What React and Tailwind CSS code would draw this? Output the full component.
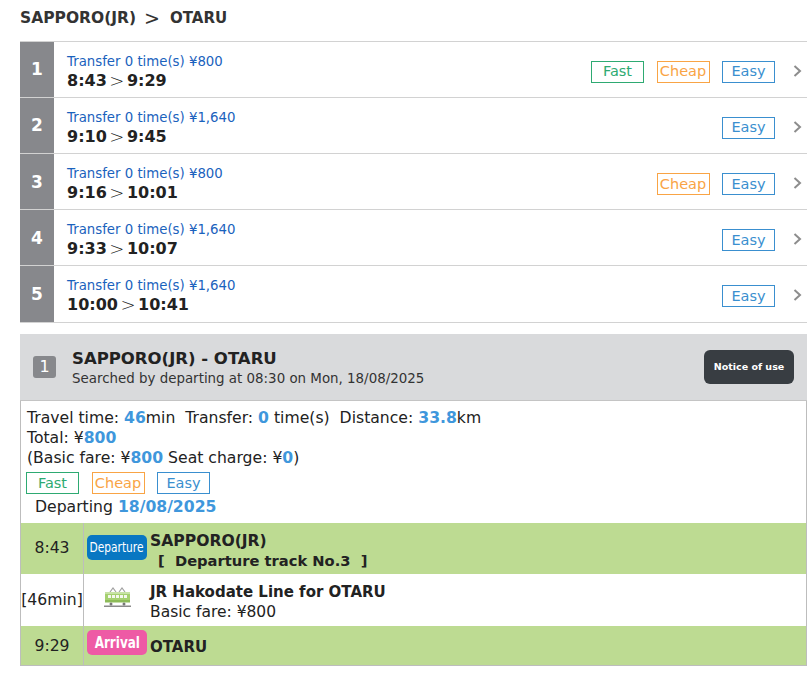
function Tag({ c, children }) {
  const m = {
    fast: "border-[#2eaa72] text-[#2eaa72]",
    cheap: "border-[#f9a445] text-[#f9a445]",
    easy: "border-[#3a8fcf] text-[#3a8fcf]",
  };
  return (
    <span className={`flex h-[22px] w-[53px] items-center justify-center border bg-white text-[14.5px] leading-none ${m[c]}`}>
      {children}
    </span>
  );
}
const rows = [
  { n: 1, t: "Transfer 0 time(s) ¥800", a: "8:43", b: "9:29", tags: ["fast", "cheap", "easy"] },
  { n: 2, t: "Transfer 0 time(s) ¥1,640", a: "9:10", b: "9:45", tags: ["easy"] },
  { n: 3, t: "Transfer 0 time(s) ¥800", a: "9:16", b: "10:01", tags: ["cheap", "easy"] },
  { n: 4, t: "Transfer 0 time(s) ¥1,640", a: "9:33", b: "10:07", tags: ["easy"] },
  { n: 5, t: "Transfer 0 time(s) ¥1,640", a: "10:00", b: "10:41", tags: ["easy"] },
];
const label = { fast: "Fast", cheap: "Cheap", easy: "Easy" };
const B = ({ children }) => <b className="font-bold text-[#3f97dc]">{children}</b>;
function Train() {
  return (
    <svg width="28" height="24" viewBox="0 0 28 24">
      <path d="M7 7 L10 3 L13 7 M16 7 L19 3 L22 7" fill="none" stroke="#a0a0a0" strokeWidth="1.2" />
      <rect x="2" y="7" width="25" height="10" rx="1.5" fill="#a5d070" />
      <rect x="2" y="7" width="25" height="2" fill="#c7e3a5" />
      <rect x="5" y="10" width="3" height="3" fill="#f4f7ee" />
      <rect x="9" y="10" width="3" height="3" fill="#f4f7ee" />
      <rect x="13" y="10" width="3" height="3" fill="#f4f7ee" />
      <rect x="17" y="10" width="3" height="3" fill="#f4f7ee" />
      <rect x="21" y="10" width="3" height="3" fill="#f4f7ee" />
      <rect x="2" y="15" width="25" height="2.5" fill="#8dbb58" />
      <rect x="1" y="20.5" width="27" height="1.5" fill="#8a8a8a" />
      <circle cx="8" cy="19" r="1.5" fill="#777" />
      <circle cx="21" cy="19" r="1.5" fill="#777" />
    </svg>
  );
}
export default function App() {
  return (
    <div className="w-[811px] bg-white pr-1 pl-5 font-['DejaVu_Sans','Noto_Sans',sans-serif] text-[#222]">
      <div className="flex h-[41px] items-start pt-[8px] text-[15.5px] leading-[20px] font-bold text-[#333]">
        <span>SAPPORO(JR)</span>
        <span className="ml-[8px] mr-[10px] text-[19px] font-normal">&gt;</span>
        <span className="text-[15px]">OTARU</span>
      </div>
      <div className="border-t border-[#d2d2d2]">
        {rows.map((r) => (
          <div key={r.n} className="flex h-[56.12px] items-stretch border-b border-[#d2d2d2]">
            <div className="flex w-[34px] items-center justify-center bg-[#87888c] pt-[1px] text-[17px] font-bold text-white">{r.n}</div>
            <div className="flex flex-1 flex-col justify-center pl-[13px] pt-[5px]">
              <div className="text-[13.3px] leading-[17px] text-[#1a62bd]">{r.t}</div>
              <div className="flex items-center text-[16px] leading-[21px] font-bold text-[#222]">
                <span>{r.a}</span>
                <span className="mx-[2.5px] text-[18px] leading-[20px] font-light">&gt;</span>
                <span>{r.b}</span>
              </div>
            </div>
            <div className="flex items-center gap-[12.5px] pt-[4px] pr-[18px]">
              {r.tags.map((t) => <Tag key={t} c={t}>{label[t]}</Tag>)}
            </div>
            <div className="flex items-center pt-[3px] pr-[5px]">
              <svg width="9" height="12" viewBox="0 0 9 12"><path d="M1.5 1 L7 6 L1.5 11" fill="none" stroke="#8d8d8d" strokeWidth="2" /></svg>
            </div>
          </div>
        ))}
      </div>
      <div className="mt-[11.4px] border-x border-b border-[#bdbdbd]">
        <div className="-mx-px flex h-[67px] items-center border-b border-[#c4c4c4] bg-[#d9dadc]">
          <div className="ml-[13px] flex h-[22px] w-[23px] items-center justify-center rounded-[3px] bg-[#87888c] text-[16px] text-white">1</div>
          <div className="ml-[16px] flex-1 pt-[3px]">
            <div className="text-[16.5px] leading-[20px] font-bold text-[#222]">SAPPORO(JR) - OTARU</div>
            <div className="text-[13.4px] leading-[19px] text-[#333]">Searched by departing at 08:30 on Mon, 18/08/2025</div>
          </div>
          <div className="mr-[13px] flex h-[34px] w-[90px] items-center justify-center rounded-[6px] bg-[#383d42] text-[9.5px] font-bold text-white">Notice of use</div>
        </div>
        <div className="px-[6px] pt-[7px] text-[15.65px] leading-[20px] text-[#222]">
          <div>Travel time: <B>46</B>min&nbsp; Transfer: <B>0</B> time(s)&nbsp; Distance: <B>33.8</B>km</div>
          <div>Total: ¥<B>800</B></div>
          <div>(Basic fare: ¥<B>800</B> Seat charge: ¥<B>0</B>)</div>
          <div className="mt-[4px] -ml-px flex gap-[12.5px]">
            <Tag c="fast">Fast</Tag><Tag c="cheap">Cheap</Tag><Tag c="easy">Easy</Tag>
          </div>
          <div className="mt-[3px] h-[26px] pl-[8px]">Departing <B>18/08/2025</B></div>
        </div>
        <div className="grid grid-cols-[63px_1fr] text-[#222]">
          <div className="flex h-[51px] items-center justify-center border-r border-[#bdbdbd] bg-[#bddb92] pb-[1px] text-[15.65px]">8:43</div>
          <div className="flex h-[51px] bg-[#bddb92] pt-[12px] pl-[3px]">
            <span className="flex h-[25px] w-[60px] items-center justify-center rounded-[5px] bg-[#0877c2] text-white">
              <span className="scale-x-[0.76] text-[14px] font-medium whitespace-nowrap">Departure</span>
            </span>
            <div className="ml-[3px] -mt-[4px] font-bold">
              <div className="text-[15.6px] leading-[20px]">SAPPORO(JR)</div>
              <div className="pl-[8px] text-[14.7px] leading-[20px]">[&nbsp; Departure track No.3&nbsp;&nbsp;]</div>
            </div>
          </div>
          <div className="flex h-[52px] items-center justify-center border-r border-[#bdbdbd] text-[15.65px]">[46min]</div>
          <div className="flex h-[52px] items-center pl-[3px]">
            <span className="flex w-[60px] justify-center pb-[6px]"><Train /></span>
            <div className="ml-[3px] pt-[4px]">
              <div className="text-[15px] leading-[20px] font-bold">JR Hakodate Line for OTARU</div>
              <div className="text-[15.5px] leading-[20px]">Basic fare: ¥800</div>
            </div>
          </div>
          <div className="flex h-[39px] items-center justify-center border-r border-[#bdbdbd] bg-[#bddb92] text-[15.65px]">9:29</div>
          <div className="flex h-[39px] items-center bg-[#bddb92] pl-[3px]">
            <span className="mb-[5px] flex h-[25px] w-[60px] items-center justify-center rounded-[5px] bg-[#ee5aa5] text-white">
              <span className="scale-x-[0.8] text-[15px] font-bold whitespace-nowrap">Arrival</span>
            </span>
            <span className="ml-[3px] pt-[3px] text-[15px] font-bold">OTARU</span>
          </div>
        </div>
      </div>
    </div>
  );
}
